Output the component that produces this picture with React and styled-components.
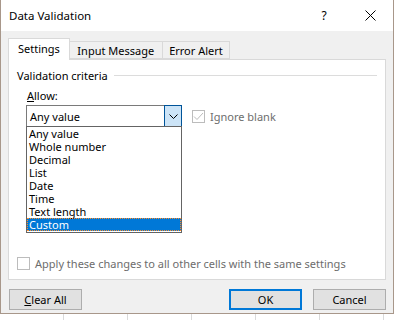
import styled, { createGlobalStyle } from 'styled-components';

const GlobalStyle = createGlobalStyle`
  body {
    margin: 0;
    background: #ffffff;
    font-family: "Noto Sans", "Open Sans", sans-serif;
    font-size: 11px;
    color: #000;
  }
`;

const Screen = styled.div`
  width: 395px;
  height: 320px;
  overflow: hidden;
  background:
    repeating-linear-gradient(90deg, transparent 0 63px, #dadada 63px 64px),
    #ffffff;
`;

const Window = styled.div`
  width: 392px;
  height: 313px;
  display: flex;
  flex-direction: column;
  background: #f0f0f0;
  border-left: 1px solid #a8978a;
  border-right: 1px solid #a8978a;
  border-bottom: 1px solid #a8978a;
`;

const TitleBar = styled.div`
  height: 31px;
  flex: none;
  display: flex;
  align-items: center;
  background: #ffffff;
  padding-left: 8px;
`;

const Title = styled.div`
  flex: 1;
  font-size: 11.5px;
`;

const TitleButton = styled.div`
  width: 46px;
  height: 31px;
  display: flex;
  align-items: center;
  justify-content: center;
  font-size: 12px;
`;

const Body = styled.div`
  flex: 1;
  display: flex;
  flex-direction: column;
  padding: 7px 7px 0 7px;
`;

const TabRow = styled.div`
  display: flex;
  align-items: flex-end;
  height: 21px;
  position: relative;
  z-index: 1;
`;

const Tab = styled.div`
  height: ${p => (p.$active ? '22px' : '18px')};
  margin-bottom: ${p => (p.$active ? '-1px' : '0')};
  padding: 0 ${p => p.$pad}px;
  display: flex;
  align-items: center;
  box-sizing: border-box;
  border: 1px solid #d9d9d9;
  border-bottom: ${p => (p.$active ? 'none' : '1px solid #d9d9d9')};
  border-left: ${p => (p.$first ? '1px solid #d9d9d9' : 'none')};
  background: ${p => (p.$active ? '#ffffff' : '#f0f0f0')};
  padding-bottom: ${p => (p.$active ? '2px' : '0')};
`;

const Panel = styled.div`
  height: 221px;
  box-sizing: border-box;
  background: #ffffff;
  border: 1px solid #d9d9d9;
  padding: 7px 8px 0 8px;
  display: flex;
  flex-direction: column;
`;

const GroupHeader = styled.div`
  display: flex;
  align-items: center;
  gap: 6px;
  height: 16px;

  &::after {
    content: '';
    flex: 1;
    height: 1px;
    background: #dcdcdc;
  }
`;

const Section = styled.div`
  padding-left: 9px;
  margin-top: 5px;
  display: flex;
  flex-direction: column;
`;

const Label = styled.div`
  height: 16px;
  line-height: 16px;
  padding-left: 1px;
`;

const Underline = styled.span`
  text-decoration: underline;
`;

const ControlRow = styled.div`
  margin-top: 1px;
  display: flex;
  align-items: center;
  gap: 10px;
`;

const ComboWrap = styled.div`
  position: relative;
  width: 156px;
`;

const Combo = styled.div`
  height: 22px;
  box-sizing: border-box;
  border: 1px solid #7a7a7a;
  display: flex;
  align-items: center;
  padding-left: 3px;
`;

const ComboText = styled.div`
  flex: 1;
`;

const DropButton = styled.div`
  width: 18px;
  height: 22px;
  margin-right: -1px;
  box-sizing: border-box;
  background: #cce4f7;
  border: 1px solid #005499;
  display: flex;
  align-items: center;
  justify-content: center;
`;

const List = styled.div`
  position: absolute;
  left: 0;
  top: 21px;
  width: 156px;
  box-sizing: border-box;
  background: #ffffff;
  border: 1px solid #646464;
  padding-bottom: 1px;
`;

const ListItem = styled.div`
  height: 13px;
  line-height: 13px;
  padding-left: 2px;
  box-sizing: border-box;
  background: ${p => (p.$selected ? '#0078d7' : 'transparent')};
  color: ${p => (p.$selected ? '#ffffff' : '#000000')};
  outline: ${p => (p.$selected ? '1px dotted #ff8c28' : 'none')};
  outline-offset: -1px;
`;

const CheckLine = styled.label`
  display: flex;
  align-items: center;
  gap: 5px;
  color: #6d6d6d;
`;

const Box = styled.span`
  width: 13px;
  height: 13px;
  box-sizing: border-box;
  border: 1px solid #bcbcbc;
  background: #ffffff;
  display: flex;
  align-items: center;
  justify-content: center;
`;

const Spacer = styled.div`
  flex: 1;
`;

const ApplyRow = styled(CheckLine)`
  margin-bottom: 8px;
`;

const ButtonRow = styled.div`
  display: flex;
  align-items: center;
  margin-top: 9px;
  padding-left: 1px;
`;

const Button = styled.div`
  width: 73px;
  height: 21px;
  box-sizing: border-box;
  display: flex;
  align-items: center;
  justify-content: center;
  background: #e1e1e1;
  border: ${p => (p.$default ? '2px solid #0078d7' : '1px solid #adadad')};
  margin-left: ${p => p.$gap || 0}px;
`;

const items = [
  'Any value',
  'Whole number',
  'Decimal',
  'List',
  'Date',
  'Time',
  'Text length',
  'Custom',
];

export default function App() {
  return (
    <Screen>
      <GlobalStyle />
      <Window>
        <TitleBar>
          <Title>Data Validation</Title>
          <TitleButton>?</TitleButton>
          <TitleButton>
            <svg width="11" height="11" viewBox="0 0 11 11">
              <path d="M0.5 0.5 L10.5 10.5 M10.5 0.5 L0.5 10.5" stroke="#000" strokeWidth="1" />
            </svg>
          </TitleButton>
        </TitleBar>
        <Body>
          <TabRow>
            <Tab $active $first $pad={9}>Settings</Tab>
            <Tab $pad={7.5}>Input Message</Tab>
            <Tab $pad={6.5}>Error Alert</Tab>
          </TabRow>
          <Panel>
            <GroupHeader>Validation criteria</GroupHeader>
            <Section>
              <Label><Underline>A</Underline>llow:</Label>
              <ControlRow>
                <ComboWrap>
                  <Combo>
                    <ComboText>Any value</ComboText>
                    <DropButton>
                      <svg width="9" height="5" viewBox="0 0 9 5">
                        <path d="M0.5 0.5 L4.5 4.5 L8.5 0.5" stroke="#000" fill="none" strokeWidth="1" />
                      </svg>
                    </DropButton>
                  </Combo>
                  <List>
                    {items.map((item, index) => (
                      <ListItem key={index} $selected={item === 'Custom'}>{item}</ListItem>
                    ))}
                  </List>
                </ComboWrap>
                <CheckLine>
                  <Box>
                    <svg width="11" height="9" viewBox="0 0 11 9">
                      <path d="M1 4.5 L4 7.5 L10 1" stroke="#bcbcbc" fill="none" strokeWidth="1" />
                    </svg>
                  </Box>
                  Ignore blank
                </CheckLine>
              </ControlRow>
            </Section>
            <Spacer />
            <ApplyRow>
              <Box />
              Apply these changes to all other cells with the same settings
            </ApplyRow>
          </Panel>
          <ButtonRow>
            <Button><span><Underline>C</Underline>lear All</span></Button>
            <Spacer />
            <Button $default>OK</Button>
            <Button $gap={11}>Cancel</Button>
          </ButtonRow>
        </Body>
      </Window>
    </Screen>
  );
}
